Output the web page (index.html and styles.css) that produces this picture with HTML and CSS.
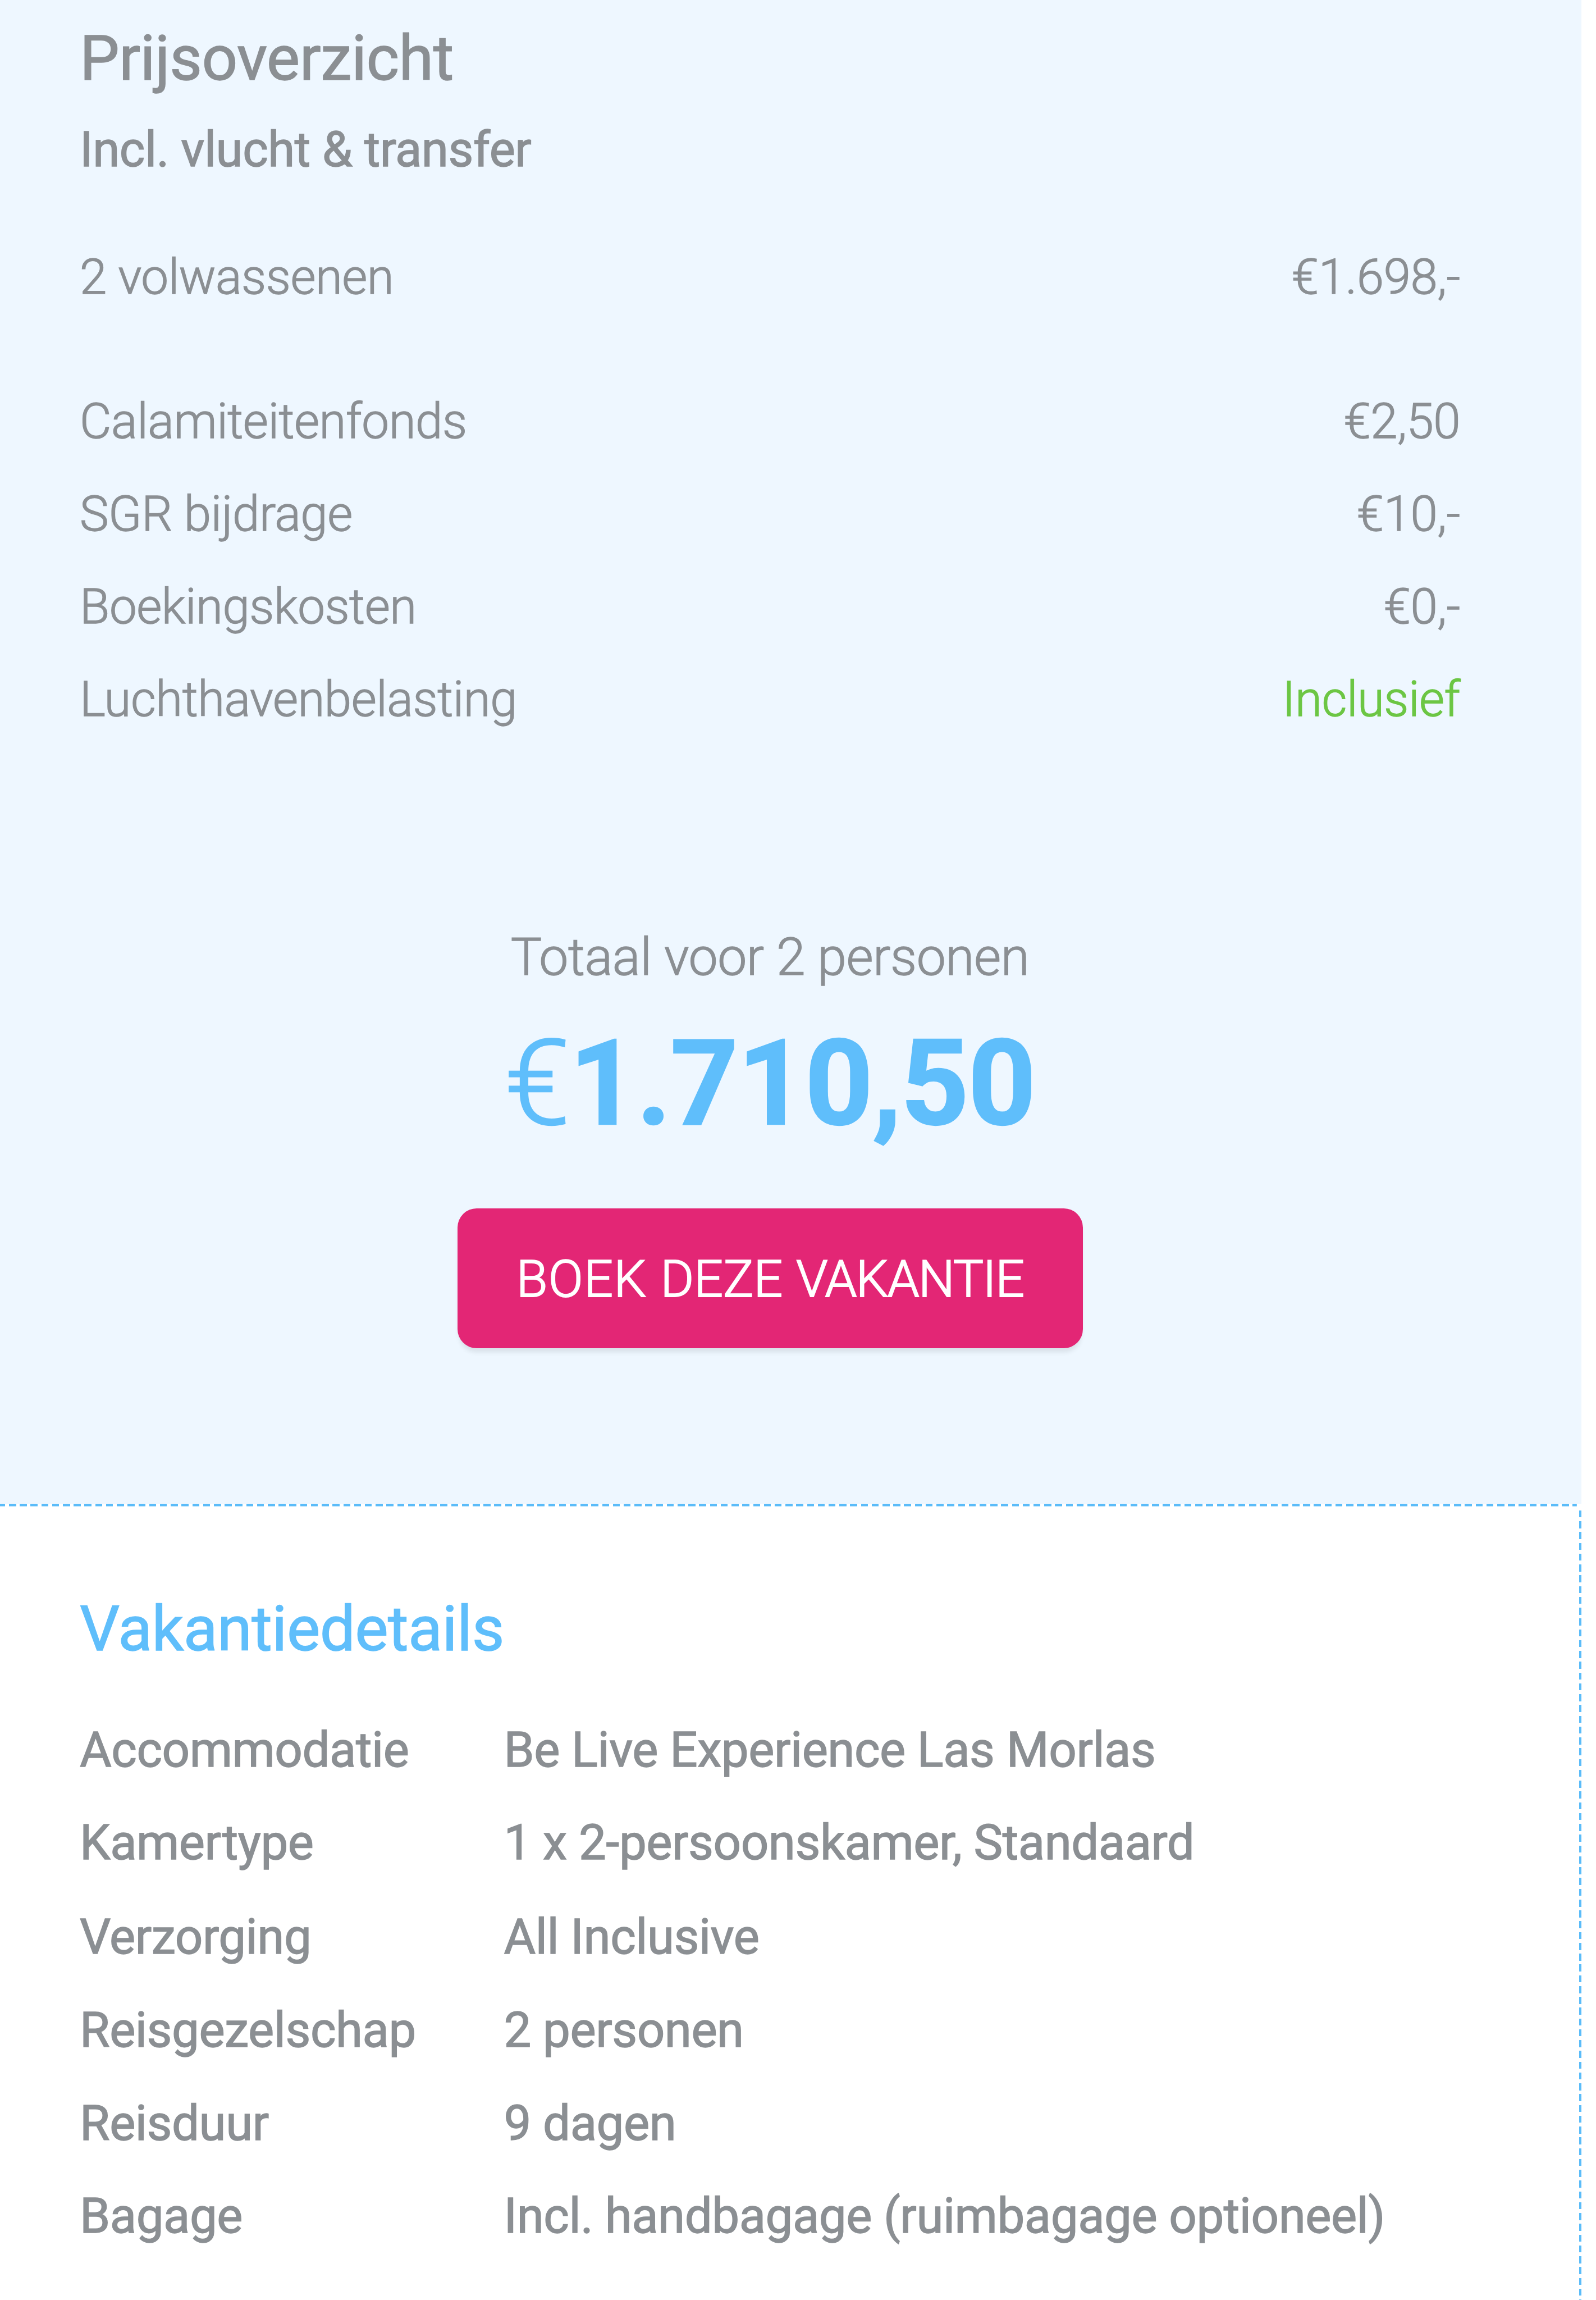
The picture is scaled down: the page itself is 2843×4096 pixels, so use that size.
FILE: index.html
```html
<!DOCTYPE html>
<html lang="nl">
<head>
<meta charset="utf-8">
<meta name="viewport" content="width=device-width, initial-scale=1.0">
<title>Prijsoverzicht</title>
<link rel="stylesheet" href="styles.css">
</head>
<body>
<section class="prices">
<h2>Prijsoverzicht</h2>
<h3>Incl. vlucht &amp; transfer</h3>
<ul class="price-list">
<li><span>2 volwassenen</span><span>€1.698,-</span></li>
</ul>
<ul class="price-list">
<li><span>Calamiteitenfonds</span><span>€2,50</span></li>
<li><span>SGR bijdrage</span><span>€10,-</span></li>
<li><span>Boekingskosten</span><span>€0,-</span></li>
<li><span>Luchthavenbelasting</span><span class="included">Inclusief</span></li>
</ul>
<div class="total">
<p class="total-label">Totaal voor 2 personen</p>
<p class="total-price">€<strong>1.710,50</strong></p>
<a class="button" href="#"><span class="wide">BOEK</span> DEZE <span class="tight">VAKANTIE</span></a>
</div>
</section>
<section class="details">
<h2>Vakantiedetails</h2>
<dl>
<dt>Accommodatie</dt><dd>Be Live Experience Las Morlas</dd>
<dt>Kamertype</dt><dd>1 x 2-persoonskamer, Standaard</dd>
<dt>Verzorging</dt><dd>All Inclusive</dd>
<dt>Reisgezelschap</dt><dd>2 personen</dd>
<dt>Reisduur</dt><dd>9 dagen</dd>
<dt>Bagage</dt><dd>Incl. handbagage (ruimbagage optioneel)</dd>
</dl>
</section>
</body>
</html>
```
FILE: styles.css
```css
* { box-sizing: border-box; }
html { background: #fff; }
body {
  display: flex;
  flex-direction: column;
  width: 2817px;
  height: 4096px;
  margin: 0;
  overflow: hidden;
  color: #8b8f93;
  font-family: Roboto, sans-serif;
  font-size: 87px;
  letter-spacing: -0.45px;
  -webkit-text-stroke: 1.4px currentColor;
}
h2, h3, p, ul, dl, dd {
  margin: 0;
  padding: 0;
  font-weight: 400;
}
h2 {
  font-size: 112px;
  line-height: 130px;
  letter-spacing: -0.6px;
}
.prices {
  height: 2678px;
  padding: 39px 216px 0 142px;
  background: #eef7ff;
}
.prices h3 {
  margin-top: 14px;
  font-size: 87px;
  line-height: 166px;
}
.price-list {
  margin-top: 62px;
  list-style: none;
  font-weight: 300;
  line-height: 165px;
}
.price-list + .price-list { margin-top: 92px; }
.price-list li {
  display: flex;
  justify-content: space-between;
}
.included { color: #6cc644; }
.total {
  display: flex;
  flex-direction: column;
  align-items: center;
  margin-top: 317px;
}
.total-label {
  font-size: 93px;
  font-weight: 300;
  line-height: 120px;
}
.total-price {
  margin-top: 45px;
  color: #5fbefb;
  font-size: 211px;
  font-weight: 300;
  line-height: 240px;
  letter-spacing: -1.2px;
  -webkit-text-stroke-width: 2.4px;
}
.total-price strong { font-weight: 700; }
.button {
  width: 1114px;
  height: 249px;
  margin-top: 102px;
  border-radius: 34px;
  background: #e32675;
  box-shadow: 0 10px 8px -3px rgba(0, 0, 0, .09);
  color: #fff;
  font-size: 91px;
  font-weight: 300;
  line-height: 253px;
  letter-spacing: 0;
  word-spacing: 2px;
  text-align: center;
  text-decoration: none;
  -webkit-text-stroke-width: 2px;
}
.button .wide { letter-spacing: 1.5px; }
.button .tight { letter-spacing: -1.6px; }
.details {
  flex: 1;
  padding: 158px 0 0 142px;
  /* dashes are longer than a dashed border draws them */
  background:
    repeating-linear-gradient(90deg, #5bbcf9 0 12.5px, transparent 12.5px 19.21px) -3.2px 0 / 2812px 4.5px no-repeat,
    repeating-linear-gradient(180deg, #5bbcf9 0 12.5px, transparent 12.5px 19.25px) 100% 12px / 4.5px 100% no-repeat;
}
.details h2 { color: #5fbefb; }
.details dl {
  display: grid;
  grid-template-columns: 755.5px 1fr;
  grid-template-rows: 165.4px 168px 166px 166px 165px 166px;
  margin-top: 67px;
  line-height: 166px;
}
```
